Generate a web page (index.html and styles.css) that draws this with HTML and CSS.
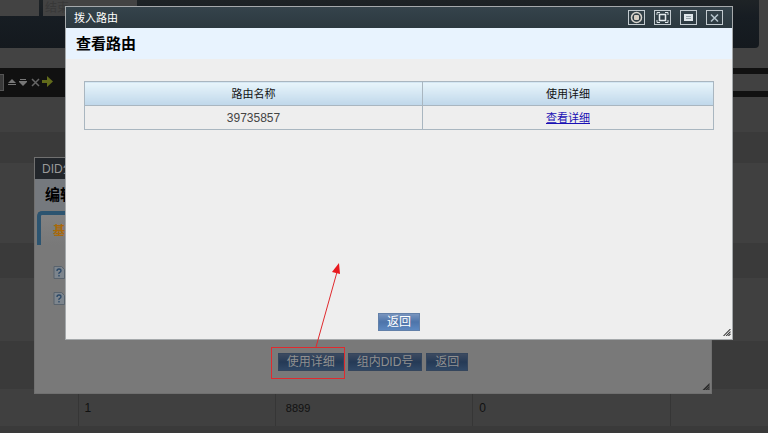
FILE: index.html
```html
<!DOCTYPE html>
<html lang="zh-CN">
<head>
<meta charset="utf-8">
<title>拨入路由</title>
<link rel="stylesheet" href="styles.css">
</head>
<body>
<div class="page">
  <header class="banner">
    <div class="banner-panel">
      <span class="banner-field"></span>
      <span class="banner-field banner-field-wide">结束</span>
    </div>
  </header>
  <div class="toolbar">
    <span class="toolbar-input"></span>
    <svg class="toolbar-icons" viewBox="0 0 50 14" aria-hidden="true">
      <path d="M1 7l4-4 4 4z M1 8h8v1H1z" fill="#777"/>
      <path d="M12 5h8v1l-4 4-4-4z M13 3h6v1h-6z" fill="#777"/>
      <path d="M25 3l7 7M32 3l-7 7" stroke="#666" stroke-width="1.500"/>
      <path d="M35 4h5V0l6 5.500-6 5.500V7h-5z" fill="#626b1b"/>
    </svg>
    <span class="toolbar-track"></span>
  </div>
  <div class="band band-a"></div>
  <div class="band band-b dark"></div>
  <div class="band band-c"></div>
  <div class="band band-a dark"></div>
  <div class="band band-d"></div>
  <div class="band band-e dark"></div>
  <table class="records">
    <tr><td class="lead"></td><td>1</td><td class="code">8899</td><td>0</td><td class="tail"></td></tr>
  </table>
</div>

<section class="window window-edit">
  <div class="titlebar">DID分</div>
  <h2 class="heading">编辑</h2>
  <div class="tab">基</div>
  <div class="hints">
    <svg viewBox="0 0 12 13"><path d="M1 .5h7.500l3 3v9H1z" fill="#7d858d" stroke="#59636d"/><path d="M4 5q0-2 2-2t2 1.800q0 1-1.200 1.600T6 8M6 9v1.500" fill="none" stroke="#294766" stroke-width="1.300"/></svg>
    <svg viewBox="0 0 12 13"><path d="M1 .5h7.500l3 3v9H1z" fill="#7d858d" stroke="#59636d"/><path d="M4 5q0-2 2-2t2 1.800q0 1-1.200 1.600T6 8M6 9v1.500" fill="none" stroke="#294766" stroke-width="1.300"/></svg>
  </div>
  <div class="actions">
    <button class="btn" type="button">使用详细</button>
    <button class="btn" type="button">组内DID号</button>
    <button class="btn" type="button">返回</button>
  </div>
  <svg class="grip" viewBox="0 0 8 8" aria-hidden="true"><path d="M0 8L8 0v8z" fill="#2c2c2c"/><path d="M3 8l5-5M5.500 8L8 5.500" stroke="#707070" stroke-width=".7"/></svg>
</section>

<section class="window window-route">
  <div class="titlebar">
    <span>拨入路由</span>
    <div class="controls">
      <button type="button" aria-label="刷新"><svg viewBox="0 0 17 15"><rect x=".5" y=".5" width="16" height="14" fill="none" stroke="#c3cbd0"/><circle cx="8.500" cy="7.500" r="5" fill="none" stroke="#d6d3cd" stroke-width="1.500"/><rect x="6" y="5" width="5" height="5" rx="1" fill="#d6cec3"/></svg></button>
      <button type="button" aria-label="最大化"><svg viewBox="0 0 17 15"><rect x=".5" y=".5" width="16" height="14" fill="none" stroke="#c3cbd0"/><rect x="5.500" y="4.500" width="6" height="6" fill="none" stroke="#e4eaed" stroke-width="1.500"/><path d="M3 5V2.500h3M11 2.500h3V5M14 10v2.500h-3M6 12.500H3V10" fill="none" stroke="#dce3e7"/></svg></button>
      <button type="button" aria-label="还原"><svg viewBox="0 0 17 15"><rect x=".5" y=".5" width="16" height="14" fill="none" stroke="#c3cbd0"/><rect x="4" y="4" width="9" height="7" fill="#dfe6ea"/><path d="M6 6.500h5M6 8.500h5" stroke="#94a1a8"/></svg></button>
      <button type="button" aria-label="关闭"><svg viewBox="0 0 17 15"><rect x=".5" y=".5" width="16" height="14" fill="none" stroke="#c3cbd0"/><path d="M5 4.500l7 7M12 4.500l-7 7" stroke="#b5c3cc" stroke-width="1.600"/></svg></button>
    </div>
  </div>
  <h1 class="heading">查看路由</h1>
  <table class="routes">
    <thead><tr><th class="name">路由名称</th><th>使用详细</th></tr></thead>
    <tbody><tr><td class="number">39735857</td><td><a href="#">查看详细</a></td></tr></tbody>
  </table>
  <div class="actions">
    <button class="btn" type="button">返回</button>
  </div>
  <svg class="grip" viewBox="0 0 8 8" aria-hidden="true"><path d="M0 8l8-8M3 8l5-5M5.500 8L8 5.500" stroke="#333" stroke-width="1.200"/></svg>
</section>

<svg class="callout" viewBox="0 0 76 118" aria-hidden="true">
  <rect x="1.500" y="85.500" width="73" height="31" fill="none" stroke="#e02a2e"/>
  <path d="M46 85L67 10" stroke="#e02a2e"/>
  <path d="M69 1L62 10l8 2z" fill="#e8191e"/>
</svg>
</body>
</html>
```
FILE: styles.css
```css
* {
  box-sizing: border-box;
}

body {
  margin: 0;
  position: relative;
  min-height: 100vh;
  overflow: hidden;
  background: #3a3a3a;
  color: #111;
  font: 12px/16px "Liberation Sans", "Noto Sans CJK SC", sans-serif;
}

button {
  font: inherit;
}

/* Dimmed page behind the windows */
.banner {
  height: 68px;
  padding: 0 9px 20px 0;
  background: #434343;
}

.banner-panel {
  display: flex;
  gap: 4px;
  height: 48px;
  border-bottom-right-radius: 4px;
  background: linear-gradient(#1e2326, #171d23 35%, #14191e);
}

.banner-field {
  width: 39px;
  height: 16px;
  overflow: hidden;
  background: #434343;
}

.banner-field-wide {
  width: 94px;
  padding-left: 2px;
  color: #383838;
}

.toolbar {
  display: flex;
  align-items: center;
  height: 29px;
  background: #111;
}

.toolbar-input {
  width: 4px;
  height: 17px;
  border: 1px solid #555;
  border-left: 0;
  background: #393939;
}

.toolbar-icons {
  width: 50px;
  height: 14px;
  margin-left: 3px;
}

.toolbar-track {
  width: 38px;
  height: 17px;
  margin-left: auto;
  background: #414141;
}

.band {
  height: 35px;
  background: #404040;
}

.band-b {
  height: 31px;
}

.band-c {
  height: 80px;
}

.band-d {
  height: 63px;
}

.band-e {
  height: 48px;
}

.band.dark {
  background: #3a3a3a;
}

.records {
  width: 100%;
  height: 37px;
  border-collapse: collapse;
  table-layout: fixed;
  background: #404040;
}

.records td {
  padding: 0 6px;
  border-right: 1px solid #363636;
}

.records .lead {
  width: 78px;
}

.records .code {
  padding-left: 10px;
  font-size: 11px;
}

.records .tail {
  width: 98px;
  border-right: 0;
}

/* Windows */
.window {
  position: absolute;
  display: flex;
  flex-direction: column;
}

.titlebar {
  display: flex;
  justify-content: space-between;
  align-items: center;
  height: 21px;
  padding: 0 8px;
}

.heading {
  margin: 0;
  padding: 0 10px;
  font-size: 15px;
  line-height: 31px;
}

.actions {
  display: flex;
  justify-content: center;
  gap: 4px;
  margin-top: auto;
}

.btn {
  height: 18px;
  padding: 0 8px;
  border: 1px solid #6280a9;
  background: linear-gradient(#7894be, #4d74aa 50%, #5d88c0);
  color: #fff;
  line-height: 16px;
}

.grip {
  position: absolute;
  right: 1px;
  bottom: 3px;
  width: 8px;
  height: 7px;
}

.window-edit {
  top: 157px;
  right: 56px;
  left: 34px;
  min-height: 237px;
  padding-bottom: 22px;
  border: 1px solid #707070;
  background: #797979;
}

.window-edit .titlebar {
  padding: 0 7px;
  background: #22262b;
  color: #999;
}

.window-edit .heading {
  background: #75797e;
  color: #000;
}

.window-edit .tab {
  width: 90px;
  height: 34px;
  margin: 1px 2px;
  padding: 8px 12px;
  border: solid #2c5470;
  border-width: 4px 0 0 4px;
  border-top-left-radius: 5px;
  background: linear-gradient(#828282, #797979);
  color: #a9690a;
  font-weight: bold;
}

.hints {
  display: flex;
  flex-direction: column;
  gap: 13px;
  padding: 20px 18px;
}

.hints svg {
  width: 12px;
  height: 13px;
}

.window-edit .btn {
  border-color: #35465d;
  background: linear-gradient(#3c4a60, #253a56 50%, #304866);
  color: #909090;
}

.window-route {
  top: 6px;
  right: 35px;
  left: 65px;
  min-height: 334px;
  padding-bottom: 8px;
  border: 1px solid #a5a9ab;
  background: #eee;
}

.window-route .titlebar {
  background: linear-gradient(#35434b, #2c3940);
  color: #fff;
  font-size: 11px;
}

.window-route .heading {
  background: #e8f3fe;
  color: #000;
}

.controls {
  display: flex;
  gap: 9px;
  padding-right: 1px;
}

.controls button {
  display: flex;
  padding: 0;
  border: 0;
  background: none;
}

.controls svg {
  width: 17px;
  height: 15px;
}

.routes {
  margin: 22px 18px;
  border-collapse: collapse;
  table-layout: fixed;
  font-size: 11px;
  text-align: center;
}

.routes th,
.routes td {
  height: 24px;
  padding: 0;
  border: 1px solid #a9b6c0;
}

.routes th {
  background: linear-gradient(#e8f5fb, #bfd7ea);
  font-weight: normal;
}

.routes .name {
  width: 338px;
}

.routes .number {
  color: #444;
  font-size: 12px;
}

.routes a {
  color: #1a10b4;
}

/* Annotation pointing from the details button to its window */
.callout {
  position: absolute;
  top: 262px;
  left: 270px;
  width: 76px;
  height: 118px;
}
```
